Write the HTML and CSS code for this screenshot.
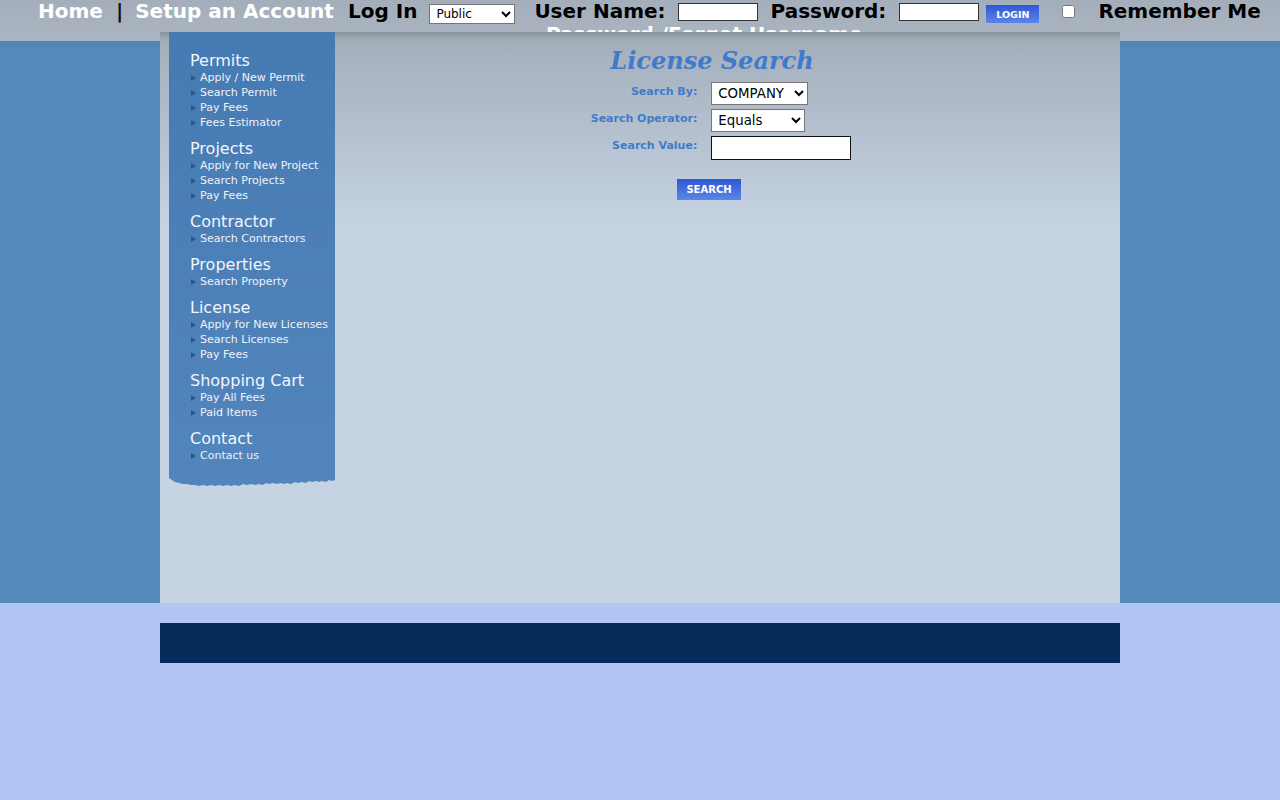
FILE: index.html
```html
<!DOCTYPE html>
<html>
<head>
<meta charset="utf-8">
<title>License Search</title>
<link rel="stylesheet" href="styles.css">
</head>
<body>
<div class="page">
  <div class="topbar">
    <div class="topline">
      <a class="tl-link" href="#">Home</a>
      <span class="tl-sep">|</span>
      <a class="tl-link tl-setup" href="#">Setup an Account</a>
      <span class="tl-label tl-login">Log In</span>
      <select class="tl-select"><option>Public</option></select>
      <span class="tl-label tl-user">User Name:</span>
      <input class="tl-input tl-input-user" type="text">
      <span class="tl-label tl-pass">Password:</span>
      <input class="tl-input tl-input-pass" type="password">
      <button class="btn btn-login" type="button">LOGIN</button>
      <input class="tl-check" type="checkbox">
      <span class="tl-label tl-remember">Remember Me</span>
    </div>
    <div class="topline2"><a class="tl-link" href="#">Password /Forget Username</a></div>
  </div>
  <div class="container">
    <div class="sidebar">
      <div class="sidebar-body">
        <div class="nav-group">
          <div class="nav-h">Permits</div>
          <a class="nav-item" href="#">Apply / New Permit</a>
          <a class="nav-item" href="#">Search Permit</a>
          <a class="nav-item" href="#">Pay Fees</a>
          <a class="nav-item" href="#">Fees Estimator</a>
        </div>
        <div class="nav-group">
          <div class="nav-h">Projects</div>
          <a class="nav-item" href="#">Apply for New Project</a>
          <a class="nav-item" href="#">Search Projects</a>
          <a class="nav-item" href="#">Pay Fees</a>
        </div>
        <div class="nav-group">
          <div class="nav-h">Contractor</div>
          <a class="nav-item" href="#">Search Contractors</a>
        </div>
        <div class="nav-group">
          <div class="nav-h">Properties</div>
          <a class="nav-item" href="#">Search Property</a>
        </div>
        <div class="nav-group">
          <div class="nav-h">License</div>
          <a class="nav-item" href="#">Apply for New Licenses</a>
          <a class="nav-item" href="#">Search Licenses</a>
          <a class="nav-item" href="#">Pay Fees</a>
        </div>
        <div class="nav-group">
          <div class="nav-h">Shopping Cart</div>
          <a class="nav-item" href="#">Pay All Fees</a>
          <a class="nav-item" href="#">Paid Items</a>
        </div>
        <div class="nav-group">
          <div class="nav-h">Contact</div>
          <a class="nav-item" href="#">Contact us</a>
        </div>
      </div>
      <svg class="torn" width="166" height="14" viewBox="0 0 166 14">
        <polygon fill="#5185bc" points="0,0 166,0 166,4 163,5 160,4 157,6 153,5 150,6 147,5 143,6 140,5 137,7 133,6 129,7 126,6 122,8 118,7 115,8 112,7 108,8 104,7 100,8 97,7 94,9 90,8 86,9 82,8 78,9 74,8 70,10 66,9 62,10 58,9 54,10 50,9 46,10 42,9 38,10 34,9 30,10 26,9 22,9 18,8 14,8 10,7 6,6 3,4 0,2"/>
      </svg>
    </div>
    <div class="content">
      <h1 class="title">License Search</h1>
      <div class="form">
        <div class="lbl">Search By:</div>
        <select class="ctl ctl-by"><option>COMPANY</option></select>
        <div class="lbl">Search Operator:</div>
        <select class="ctl ctl-op"><option>Equals</option></select>
        <div class="lbl">Search Value:</div>
        <input class="ctl ctl-val" type="text">
      </div>
      <button class="btn btn-search" type="button">SEARCH</button>
    </div>
  </div>
</div>
<div class="footer-gap"></div>
<div class="footer-bar"></div>
</body>
</html>
```
FILE: styles.css
```css
html, body {
  margin: 0;
  padding: 0;
}
body {
  background: #b2c5f5;
  font-family: "DejaVu Sans", sans-serif;
}
.page {
  height: 603px;
  background: linear-gradient(to bottom, #a4aeba 0, #acb6c2 41px, #4e83b2 41px, #548bbb 50px, #548bbb 100%);
}
.topbar {
  height: 41px;
  font: bold 20px/23px "DejaVu Sans", sans-serif;
  white-space: nowrap;
}
.topline {
  display: flex;
  align-items: flex-start;
  height: 23px;
  padding-left: 38px;
}
.tl-link {
  color: #ffffff;
  text-decoration: none;
}
.tl-label {
  color: #000000;
}
.tl-sep {
  color: #111111;
  margin-left: 13px;
}
.tl-setup { margin-left: 12px; }
.tl-login { margin-left: 14px; }
.tl-select {
  margin: 4px 0 0 12px;
  width: 86px;
  height: 20px;
  font: 12px "DejaVu Sans", sans-serif;
  border: 1px solid #767676;
  border-radius: 0;
  background: #fff;
  padding: 0 0 0 2px;
}
.tl-user { margin-left: 19px; }
.tl-input {
  box-sizing: border-box;
  width: 80px;
  height: 18px;
  margin: 3px 0 0 12px;
  border: 1px solid #333;
  background: #fff;
  padding: 0;
}
.tl-pass { margin-left: 13px; }
.tl-input-pass { margin-left: 13px; }
.btn {
  border: 0;
  color: #fff;
  background: linear-gradient(to bottom, #2f56d5, #5b86e8);
  font-family: "DejaVu Sans", sans-serif;
  font-weight: bold;
  padding: 0;
  cursor: pointer;
}
.btn-login {
  width: 53px;
  height: 18px;
  margin: 5px 0 0 7px;
  font-size: 9.5px;
}
.tl-check {
  width: 13px;
  height: 13px;
  margin: 5px 0 0 23px;
}
.tl-remember { margin-left: 23px; }
.topline2 {
  padding-left: 546px;
  height: 18px;
}

.container {
  position: relative;
  width: 960px;
  height: 571px;
  margin: -9px auto 0;
  display: flex;
  align-items: flex-start;
  background: linear-gradient(to bottom, #8b939d 0, #a2acb9 8px, #a7b1be 20px, #c4d2e2 190px, #c6d3e3 100%);
}
.sidebar {
  margin-left: 9px;
  width: 166px;
}
.sidebar-body {
  padding: 19px 0 13px 21px;
  background: linear-gradient(to bottom, #467ab2, #5185bc);
}
.torn {
  display: block;
}
.nav-group + .nav-group {
  margin-top: 9px;
}
.nav-h {
  font: 16px/19px "DejaVu Sans", sans-serif;
  color: #f2f5fb;
}
.nav-item {
  display: flex;
  align-items: center;
  margin-left: 1px;
  font: 11px/15px "DejaVu Sans", sans-serif;
  color: #eef2f9;
  text-decoration: none;
}
.nav-item::before {
  content: "";
  width: 0;
  height: 0;
  border-left: 5px solid #2c5687;
  border-top: 3px solid transparent;
  border-bottom: 3px solid transparent;
  margin-right: 4px;
}

.content {
  flex: 1;
  padding: 14px 31px 0 0;
  display: flex;
  flex-direction: column;
  align-items: center;
}
.title {
  margin: 0 0 6px;
  font: italic bold 24px/30px "DejaVu Serif", serif;
  color: #3e7bcb;
}
.form {
  display: grid;
  grid-template-columns: auto auto;
  column-gap: 14px;
  row-gap: 4px;
  padding-left: 18px;
}
.lbl {
  font: bold 11px/13px "DejaVu Sans", sans-serif;
  color: #3f7bcb;
  text-align: right;
  padding-top: 3px;
}
.ctl {
  box-sizing: border-box;
  height: 23px;
  font: 13.33px "DejaVu Sans", sans-serif;
  background: #fff;
  border: 1px solid #767676;
  border-radius: 0;
  padding: 0 0 0 2px;
}
.ctl-by { width: 97px; }
.ctl-op { width: 94px; }
.ctl-val {
  width: 140px;
  height: 24px;
  border: 1px solid #111;
}
.btn-search {
  width: 64px;
  height: 21px;
  margin: 19px 6px 0 0;
  font-size: 10px;
}
.footer-gap {
  height: 20px;
}
.footer-bar {
  width: 960px;
  height: 40px;
  margin: 0 auto;
  background: #062a5a;
}
```
